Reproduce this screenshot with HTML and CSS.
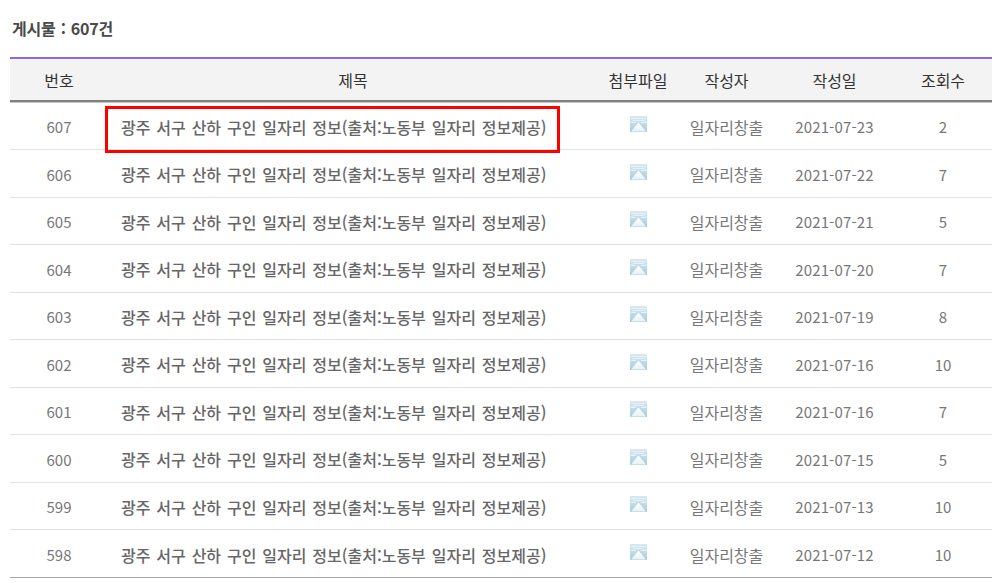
FILE: index.html
```html
<!DOCTYPE html>
<html lang="ko">
<head>
<meta charset="utf-8">
<title>게시물</title>
<link rel="stylesheet" href="styles.css">
</head>
<body>
<svg class="defs" width="0" height="0" aria-hidden="true">
  <defs>
    <linearGradient id="mailBg" x1="0" y1="0" x2="0" y2="1">
      <stop offset="0" stop-color="#d8e8f1"/>
      <stop offset="1" stop-color="#a6cddd"/>
    </linearGradient>
    <linearGradient id="mailFlap" x1="0" y1="0" x2="0" y2="1">
      <stop offset="0" stop-color="#ffffff"/>
      <stop offset="1" stop-color="#e6f1f6"/>
    </linearGradient>
    <symbol id="mail" viewBox="0 0 17 16">
      <rect x="0" y="0" width="17" height="16" fill="url(#mailBg)"/>
      <path d="M1 2.500h15M3 4.500h11l2 2M3 4.500l-2 2M1 6.500h5M11 6.500h5" stroke="#e8f2f7" stroke-width="1" fill="none"/>
      <path d="M1 15.500 L8.500 6.500 L16 15.500 Z" fill="url(#mailFlap)"/>
    </symbol>
  </defs>
</svg>
<main class="board">
  <p class="count">게시물 : 607건</p>
  <div class="table-wrap">
    <table class="list">
      <colgroup>
        <col class="c-no"><col class="c-title"><col class="c-file"><col class="c-author"><col class="c-date"><col class="c-views">
      </colgroup>
      <thead>
        <tr><th>번호</th><th>제목</th><th>첨부파일</th><th>작성자</th><th>작성일</th><th>조회수</th></tr>
      </thead>
      <tbody>
        <tr><td class="num">607</td><td class="title">광주 서구 산하 구인 일자리 정보(출처:노동부 일자리 정보제공)</td><td><svg class="ico"><use href="#mail"/></svg></td><td>일자리창출</td><td class="num date">2021-07-23</td><td class="num">2</td></tr>
        <tr><td class="num">606</td><td class="title">광주 서구 산하 구인 일자리 정보(출처:노동부 일자리 정보제공)</td><td><svg class="ico"><use href="#mail"/></svg></td><td>일자리창출</td><td class="num date">2021-07-22</td><td class="num">7</td></tr>
        <tr><td class="num">605</td><td class="title">광주 서구 산하 구인 일자리 정보(출처:노동부 일자리 정보제공)</td><td><svg class="ico"><use href="#mail"/></svg></td><td>일자리창출</td><td class="num date">2021-07-21</td><td class="num">5</td></tr>
        <tr><td class="num">604</td><td class="title">광주 서구 산하 구인 일자리 정보(출처:노동부 일자리 정보제공)</td><td><svg class="ico"><use href="#mail"/></svg></td><td>일자리창출</td><td class="num date">2021-07-20</td><td class="num">7</td></tr>
        <tr><td class="num">603</td><td class="title">광주 서구 산하 구인 일자리 정보(출처:노동부 일자리 정보제공)</td><td><svg class="ico"><use href="#mail"/></svg></td><td>일자리창출</td><td class="num date">2021-07-19</td><td class="num">8</td></tr>
        <tr><td class="num">602</td><td class="title">광주 서구 산하 구인 일자리 정보(출처:노동부 일자리 정보제공)</td><td><svg class="ico"><use href="#mail"/></svg></td><td>일자리창출</td><td class="num date">2021-07-16</td><td class="num">10</td></tr>
        <tr><td class="num">601</td><td class="title">광주 서구 산하 구인 일자리 정보(출처:노동부 일자리 정보제공)</td><td><svg class="ico"><use href="#mail"/></svg></td><td>일자리창출</td><td class="num date">2021-07-16</td><td class="num">7</td></tr>
        <tr><td class="num">600</td><td class="title">광주 서구 산하 구인 일자리 정보(출처:노동부 일자리 정보제공)</td><td><svg class="ico"><use href="#mail"/></svg></td><td>일자리창출</td><td class="num date">2021-07-15</td><td class="num">5</td></tr>
        <tr><td class="num">599</td><td class="title">광주 서구 산하 구인 일자리 정보(출처:노동부 일자리 정보제공)</td><td><svg class="ico"><use href="#mail"/></svg></td><td>일자리창출</td><td class="num date">2021-07-13</td><td class="num">10</td></tr>
        <tr><td class="num">598</td><td class="title">광주 서구 산하 구인 일자리 정보(출처:노동부 일자리 정보제공)</td><td><svg class="ico"><use href="#mail"/></svg></td><td>일자리창출</td><td class="num date">2021-07-12</td><td class="num">10</td></tr>
      </tbody>
    </table>
    <div class="highlight"></div>
  </div>
</main>
</body>
</html>
```
FILE: styles.css
```css
* { box-sizing: border-box; }
html, body { margin: 0; padding: 0; background: #fff; }
body {
  font-family: "Noto Sans CJK KR", "Noto Sans", sans-serif;
  color: #666;
  overflow: hidden;
}
.defs { position: absolute; }
.board { padding: 0 4px 0 10px; }
.count {
  margin: 0;
  padding: 17px 0 0 2px;
  height: 57px;
  font-size: 16px;
  line-height: 22px;
  font-weight: 700;
  letter-spacing: -0.25px;
  word-spacing: 1px;
  color: #4a4a4a;
}
.table-wrap { position: relative; }
.list {
  width: 982px;
  table-layout: fixed;
  border-collapse: separate;
  border-spacing: 0;
  border-top: 2px solid #8e68ea;
  border-bottom: 1px solid #a8a8a8;
}
.c-no { width: 98px; }
.c-title { width: 490px; }
.c-file { width: 80px; }
.c-author { width: 97px; }
.c-date { width: 119px; }
.c-views { width: 98px; }
.list th {
  height: 43px;
  padding: 0;
  background: #f3f3f3;
  border-bottom: 2px solid #808080;
  box-shadow: 0 1px 0 #c4c4c4;
  font-size: 16px;
  font-weight: 400;
  color: #333;
  text-align: center;
}
.list td {
  height: 47.5px;
  padding: 2px 0 0;
  border-bottom: 1px solid #e2e2e2;
  font-size: 16px;
  text-align: center;
  color: #777;
}
.list td.num { font-size: 15px; }
.list td.date { letter-spacing: 0.15px; }
.list tbody tr:first-child td { height: 48px; }
.list tbody tr:last-child td { height: 47px; border-bottom: 0; }
.list td.title {
  padding-left: 13px;
  text-align: left;
  font-weight: 500;
  color: #666;
  white-space: nowrap;
  word-spacing: 1.4px;
}
.ico {
  display: block;
  width: 17px;
  height: 16px;
  margin: -5px auto 0 32px;
}
.highlight {
  position: absolute;
  left: 95px;
  top: 49px;
  width: 455px;
  height: 47px;
  border: 3px solid #f00;
  pointer-events: none;
}
```
